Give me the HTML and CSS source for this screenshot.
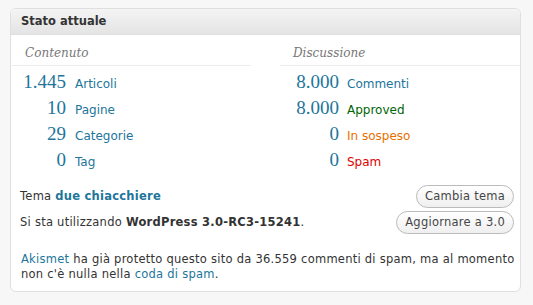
FILE: index.html
```html
<!DOCTYPE html>
<html lang="it">
<head>
    <meta charset="UTF-8">
    <title>Bacheca</title>
    <link rel="stylesheet" href="styles.css">
</head>
<body>
    <div class="postbox">
        <h3 class="hndle">Stato attuale</h3>
        <div class="inside">
            <div class="tables">
                <div class="table table-content">
                    <p class="sub">Contenuto</p>
                    <div class="row"><span class="b">1.445</span><a class="t" href="#">Articoli</a></div>
                    <div class="row"><span class="b">10</span><a class="t" href="#">Pagine</a></div>
                    <div class="row"><span class="b">29</span><a class="t" href="#">Categorie</a></div>
                    <div class="row"><span class="b">0</span><a class="t" href="#">Tag</a></div>
                </div>
                <div class="table table-discussion">
                    <p class="sub">Discussione</p>
                    <div class="row"><span class="b">8.000</span><a class="t" href="#">Commenti</a></div>
                    <div class="row"><span class="b">8.000</span><a class="t approved" href="#">Approved</a></div>
                    <div class="row"><span class="b">0</span><a class="t waiting" href="#">In sospeso</a></div>
                    <div class="row"><span class="b">0</span><a class="t spam" href="#">Spam</a></div>
                </div>
            </div>
            <div class="versions">
                <div class="vrow">
                    <span>Tema <a class="theme" href="#">due chiacchiere</a></span>
                    <a class="button" href="#">Cambia tema</a>
                </div>
                <div class="vrow">
                    <span>Si sta utilizzando <strong>WordPress 3.0-RC3-15241</strong>.</span>
                    <a class="button" href="#">Aggiornare a 3.0</a>
                </div>
            </div>
            <p class="akismet"><a href="#">Akismet</a> ha già protetto questo sito da 36.559 commenti di spam, ma al momento non c'è nulla nella <a href="#">coda di spam</a>.</p>
        </div>
    </div>
</body>
</html>
```

FILE: styles.css
```css
body {
    margin: 0;
    padding: 8px 12px 0 10px;
    background-color: #f7f7f7;
    font-family: "DejaVu Sans", Verdana, sans-serif;
    font-size: 11.5px;
    letter-spacing: 0.25px;
    color: #333;
}

a {
    color: #21759b;
    text-decoration: none;
}

.postbox {
    background-color: #fff;
    border: 1px solid #dfdfdf;
    border-radius: 6px;
    height: 284px;
    box-sizing: border-box;
}

.hndle {
    margin: 0;
    height: 25px;
    line-height: 25px;
    padding: 0 10px;
    font-size: 11.5px;
    letter-spacing: 0;
    font-weight: bold;
    color: #333;
    background: linear-gradient(#f4f4f4, #e4e4e4);
    border-bottom: 1px solid #dfdfdf;
    border-radius: 6px 6px 0 0;
}

.tables {
    display: grid;
    grid-template-columns: 239px 240px;
    column-gap: 29px;
    padding-left: 1px;
}

.sub {
    margin: 0;
    height: 30px;
    line-height: 36px;
    padding-left: 13px;
    font-family: "DejaVu Serif", Georgia, serif;
    font-style: italic;
    font-size: 12px;
    letter-spacing: 0;
    color: #777;
    border-bottom: 1px solid #ececec;
}

.row {
    display: flex;
    align-items: baseline;
    height: 26px;
    line-height: 32px;
}

.b {
    width: 54px;
    text-align: right;
    padding-right: 9px;
    font-family: "Liberation Serif", Georgia, serif;
    font-size: 19px;
    letter-spacing: 0;
    color: #21759b;
}

.table-discussion .b {
    width: 59px;
    padding-right: 8px;
}

.t {
    font-size: 12px;
    letter-spacing: 0;
}

.approved {
    color: #006505;
}

.waiting {
    color: #e66f00;
}

.spam {
    color: #d00;
}

.versions {
    margin-top: 13px;
    padding: 0 6px 0 9px;
}

.vrow {
    display: flex;
    justify-content: space-between;
    align-items: center;
    height: 26px;
}

.theme {
    font-weight: bold;
}

.button {
    color: #464646;
    border: 1px solid #bbb;
    border-radius: 12px;
    padding: 3px 8px;
    line-height: 15px;
    background: linear-gradient(#fff, #efefef);
}

.akismet {
    margin: 17px 0 0 10px;
    line-height: 15px;
}
```
